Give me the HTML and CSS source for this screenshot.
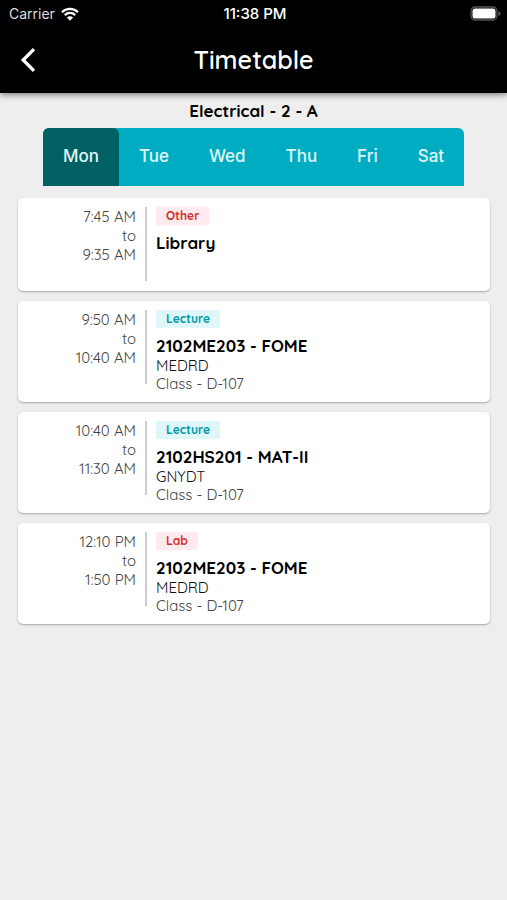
FILE: index.html
```html
<!DOCTYPE html>
<html lang="en">
<head>
<meta charset="utf-8">
<meta name="viewport" content="width=device-width, initial-scale=1">
<title>Timetable</title>
<link rel="stylesheet" href="styles.css">
</head>
<body>
<header class="top">
  <div class="status">
    <span class="carrier">Carrier
      <svg class="wifi" viewBox="0 0 18 14" aria-hidden="true">
        <path d="M1 5.2a11.4 11.4 0 0 1 16 0M3.8 8.1a7.4 7.4 0 0 1 10.4 0" fill="none" stroke="currentColor" stroke-width="2.3"/>
        <path d="M9 13.7 5.9 10.5a4.4 4.4 0 0 1 6.2 0Z" fill="currentColor"/>
      </svg>
    </span>
    <span class="clock">11:38 PM</span>
    <svg class="battery" viewBox="0 0 31 15" aria-hidden="true">
      <rect x="1" y="1" width="26" height="13" rx="4" fill="none" stroke="#555" stroke-width="1.3"/>
      <rect x="2.500" y="2.500" width="23" height="10" rx="2.500" fill="#fff"/>
      <path d="M28.500 5q2 1 2 2.500t-2 2.500Z" fill="#666"/>
    </svg>
  </div>
  <div class="bar">
    <button class="back" type="button" aria-label="Back">
      <svg viewBox="0 0 16 24" aria-hidden="true"><path d="M14 1.200 3.200 12 14 22.800" fill="none" stroke="currentColor" stroke-width="3.300"/></svg>
    </button>
    <h1>Timetable</h1>
  </div>
</header>
<main>
  <h2 class="group">Electrical - 2 - A</h2>
  <nav class="days">
    <button class="day active" type="button">Mon</button>
    <button class="day" type="button">Tue</button>
    <button class="day" type="button">Wed</button>
    <button class="day" type="button">Thu</button>
    <button class="day" type="button">Fri</button>
    <button class="day" type="button">Sat</button>
  </nav>
  <section class="list">
    <article class="card">
      <div class="time"><span>7:45 AM</span><span>to</span><span>9:35 AM</span></div>
      <div class="info">
        <span class="tag red">Other</span>
        <h3>Library</h3>
      </div>
    </article>
    <article class="card">
      <div class="time"><span>9:50 AM</span><span>to</span><span>10:40 AM</span></div>
      <div class="info">
        <span class="tag teal">Lecture</span>
        <h3>2102ME203 - FOME</h3>
        <p class="staff">MEDRD</p>
        <p class="room">Class - D-107</p>
      </div>
    </article>
    <article class="card">
      <div class="time"><span>10:40 AM</span><span>to</span><span>11:30 AM</span></div>
      <div class="info">
        <span class="tag teal">Lecture</span>
        <h3>2102HS201 - MAT-II</h3>
        <p class="staff">GNYDT</p>
        <p class="room">Class - D-107</p>
      </div>
    </article>
    <article class="card">
      <div class="time"><span>12:10 PM</span><span>to</span><span>1:50 PM</span></div>
      <div class="info">
        <span class="tag red">Lab</span>
        <h3>2102ME203 - FOME</h3>
        <p class="staff">MEDRD</p>
        <p class="room">Class - D-107</p>
      </div>
    </article>
  </section>
</main>
</body>
</html>
```
FILE: styles.css
```css
* { box-sizing: border-box; }
body {
  margin: 0;
  background: #eee;
  color: #000;
  font-family: Quicksand, Lato, sans-serif;
}
h1, h2, h3, p { margin: 0; }
button { border: 0; padding: 0; background: none; color: inherit; cursor: pointer; }

.top {
  background: #000;
  color: #fff;
  box-shadow: 0 2px 6px rgba(0, 0, 0, 0.45);
}
.status {
  display: grid;
  grid-template-columns: 1fr auto 1fr;
  align-items: center;
  height: 27px;
  padding: 0 6px 0 9px;
  font: 14px/18px Inter, sans-serif;
}
.carrier { display: flex; align-items: center; gap: 6px; color: #ddd; }
.wifi { width: 18px; height: 14px; color: #fff; }
.clock { font-size: 15px; font-weight: 500; }
.battery { width: 31px; height: 15px; justify-self: end; }
.bar {
  display: grid;
  grid-template-columns: 40px 1fr 40px;
  align-items: center;
  height: 66px;
}
.back { display: flex; justify-content: flex-end; padding-right: 4px; }
.back svg { width: 16px; height: 24px; }
h1 { font-size: 25px; line-height: 30px; font-weight: 600; text-align: center; }

.group { padding: 8px 0 7px; font-size: 17px; line-height: 20px; font-weight: 700; text-align: center; }
.days {
  display: flex;
  margin: 0 43px;
  border-radius: 6px 6px 0 0;
  overflow: hidden;
  background: #00acc1;
  color: #e0f7fa;
}
.day { flex: 1 1 auto; height: 58px; padding-bottom: 2px; font: 500 17px/20px Inter, sans-serif; }
.active { background: #006064; border-radius: 0 6px 0 0; }

.list { display: grid; gap: 10px; padding: 12px 17px 12px 18px; }
.card {
  display: flex;
  align-items: flex-start;
  min-height: 93px;
  padding: 9px 10px;
  border-radius: 5px;
  background: #fff;
  box-shadow: 0 1px 2px rgba(0, 0, 0, 0.3);
}
.time {
  display: flex;
  flex-direction: column;
  align-items: flex-end;
  flex: 0 0 25%;
  min-width: 119px;
  height: 74px;
  padding-right: 9px;
  border-right: 2px solid #ccc;
  color: #444;
  font-size: 15px;
  line-height: 19px;
}
.info { flex: 1; min-width: 0; padding-left: 9px; }
.tag {
  display: block;
  width: fit-content;
  margin-bottom: 6px;
  padding: 0 10px;
  font-size: 12px;
  line-height: 18px;
  font-weight: 700;
}
.red { background: #ffebee; color: #d32f2f; }
.teal { background: #e0f7fa; color: #0097a7; }
h3 { font-size: 17px; line-height: 23px; font-weight: 700; }
.staff, .room { font-size: 15px; line-height: 18px; }
.staff { color: #111; }
.room { color: #444; }
```
